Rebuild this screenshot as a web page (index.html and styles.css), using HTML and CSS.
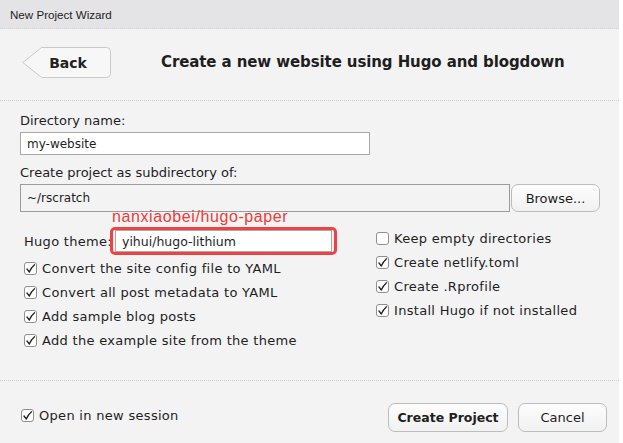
FILE: index.html
```html
<!DOCTYPE html>
<html>
<head>
<meta charset="utf-8">
<link rel="stylesheet" href="styles.css">
</head>
<body>
<div class="window">
  <div class="titlebar">New Project Wizard</div>
  <div class="header">
    <button class="back">
      <svg class="back-shape" width="89" height="31" viewBox="0 0 89 31"><path d="M19.5 0.5 H84.5 Q88.5 0.5 88.5 4.5 V26.5 Q88.5 30.5 84.5 30.5 H19.5 L0.8 15.5 Z" fill="#f7f7f7" stroke="#c9c9c9"/></svg>
      <span class="back-label">Back</span>
    </button>
    <h1 class="title">Create a new website using Hugo and blogdown</h1>
  </div>
  <div class="content">
    <div class="lbl">Directory name:</div>
    <div class="input dir">my-website</div>
    <div class="lbl lbl2">Create project as subdirectory of:</div>
    <div class="path-row">
      <div class="input path">~/rscratch</div>
      <button class="btn browse">Browse...</button>
    </div>
    <div class="note">nanxiaobei/hugo-paper</div>
    <div class="options">
      <div class="col col-left">
        <div class="theme-row">
          <span class="theme-lbl">Hugo theme:</span>
          <div class="highlight"><div class="input theme">yihui/hugo-lithium</div></div>
        </div>
        <div class="check first"><span class="box on"><svg width="11" height="11" viewBox="0 0 11 11"><path d="M2 6 L4.3 9 Q6.3 4.5 9.5 1.8" fill="none" stroke="#222" stroke-width="1.3" stroke-linecap="round" stroke-linejoin="round"/></svg></span>Convert the site config file to YAML</div>
        <div class="check"><span class="box on"><svg width="11" height="11" viewBox="0 0 11 11"><path d="M2 6 L4.3 9 Q6.3 4.5 9.5 1.8" fill="none" stroke="#222" stroke-width="1.3" stroke-linecap="round" stroke-linejoin="round"/></svg></span>Convert all post metadata to YAML</div>
        <div class="check"><span class="box on"><svg width="11" height="11" viewBox="0 0 11 11"><path d="M2 6 L4.3 9 Q6.3 4.5 9.5 1.8" fill="none" stroke="#222" stroke-width="1.3" stroke-linecap="round" stroke-linejoin="round"/></svg></span>Add sample blog posts</div>
        <div class="check"><span class="box on"><svg width="11" height="11" viewBox="0 0 11 11"><path d="M2 6 L4.3 9 Q6.3 4.5 9.5 1.8" fill="none" stroke="#222" stroke-width="1.3" stroke-linecap="round" stroke-linejoin="round"/></svg></span>Add the example site from the theme</div>
      </div>
      <div class="col col-right">
        <div class="check"><span class="box"></span>Keep empty directories</div>
        <div class="check"><span class="box on"><svg width="11" height="11" viewBox="0 0 11 11"><path d="M2 6 L4.3 9 Q6.3 4.5 9.5 1.8" fill="none" stroke="#222" stroke-width="1.3" stroke-linecap="round" stroke-linejoin="round"/></svg></span>Create netlify.toml</div>
        <div class="check"><span class="box on"><svg width="11" height="11" viewBox="0 0 11 11"><path d="M2 6 L4.3 9 Q6.3 4.5 9.5 1.8" fill="none" stroke="#222" stroke-width="1.3" stroke-linecap="round" stroke-linejoin="round"/></svg></span>Create .Rprofile</div>
        <div class="check"><span class="box on"><svg width="11" height="11" viewBox="0 0 11 11"><path d="M2 6 L4.3 9 Q6.3 4.5 9.5 1.8" fill="none" stroke="#222" stroke-width="1.3" stroke-linecap="round" stroke-linejoin="round"/></svg></span>Install Hugo if not installed</div>
      </div>
    </div>
  </div>
  <div class="footer">
    <div class="check session"><span class="box on"><svg width="11" height="11" viewBox="0 0 11 11"><path d="M2 6 L4.3 9 Q6.3 4.5 9.5 1.8" fill="none" stroke="#222" stroke-width="1.3" stroke-linecap="round" stroke-linejoin="round"/></svg></span>Open in new session</div>
    <div class="actions">
      <button class="btn create">Create Project</button>
      <button class="btn cancel">Cancel</button>
    </div>
  </div>
</div>
</body>
</html>
```

FILE: styles.css
```css
* { box-sizing: border-box; }
html, body { margin: 0; padding: 0; background: #ffffff; }
body {
  font-family: "DejaVu Sans", sans-serif;
  font-size: 12px;
  color: #1e1e1e;
}
.window {
  width: 619px;
  height: 443px;
  background: #f3f3f3;
  display: flex;
  flex-direction: column;
}
.titlebar {
  height: 29px;
  background: #e4e4e6;
  border-bottom: 1px dotted #d2d2d4;
  padding: 8px 0 0 10px;
  font-family: "Liberation Sans", Arial, sans-serif;
  font-size: 11.6px;
  color: #222;
}
.header {
  height: 72px;
  display: flex;
  align-items: flex-start;
  padding: 18px 0 0 22px;
  border-bottom: 1px dotted #cfcfcf;
}
.back {
  position: relative;
  width: 89px;
  height: 31px;
  padding: 0;
  border: 0;
  background: transparent;
  font: inherit;
  display: flex;
  align-items: center;
  justify-content: center;
}
.back-shape { position: absolute; left: 0; top: 0; }
.back-label {
  position: relative;
  font-weight: bold;
  font-size: 14px;
  color: #222;
  padding-left: 3px;
}
.title {
  margin: 6px 0 0 50px;
  font-size: 15px;
  letter-spacing: -0.1px;
  font-weight: bold;
  color: #1e1e1e;
}
.content {
  flex: 1;
  padding: 11px 0 0 20px;
  border-bottom: 1px dotted #cfcfcf;
}
.lbl { height: 17px; line-height: 17px; font-size: 13px; }
.lbl2 { margin-top: 9px; }
.input {
  background: #fff;
  border: 1px solid #a9a9a9;
  padding-left: 6px;
  display: flex;
  align-items: center;
  font-size: 12px;
}
.dir { width: 350px; height: 23px; margin-top: 3px; }
.path-row { display: flex; align-items: center; margin-top: 3px; }
.path { width: 490px; height: 28px; background: #f3f3f3; border-color: #9c9c9c; }
.btn {
  font: inherit;
  font-size: 13px;
  color: #1e1e1e;
  border: 1px solid #bcbcbc;
  border-radius: 7px;
  background: linear-gradient(#fdfdfd, #f1f1f1);
  padding: 0;
}
.browse { width: 89px; height: 28px; margin-left: 1px; }
.note {
  font-family: "Liberation Sans", Arial, sans-serif;
  font-size: 16px;
  letter-spacing: 0.6px;
  line-height: 16px;
  height: 16px;
  color: #f03a3a;
  margin: -3px 0 0 92px;
}
.options {
  display: grid;
  grid-template-columns: 352px 1fr;
  margin-top: 2px;
}
.theme-row { display: flex; align-items: center; height: 28px; padding-left: 4px; }
.theme-lbl {
  width: 86px;
  flex: none;
  white-space: nowrap;
  font-size: 13px;
  letter-spacing: 0.3px;
}
.highlight {
  position: relative;
  border: 3px solid #ec4444;
  border-radius: 5px;
  padding: 0 2px;
  height: 28px;
  display: flex;
  align-items: center;
  background: #f3f3f3;
}
.theme { width: 217px; height: 22px; font-size: 12.5px; }
.check {
  display: flex;
  align-items: center;
  height: 24px;
  padding-left: 4px;
  white-space: nowrap;
  font-size: 13px;
  letter-spacing: 0.3px;
}
.check.first { margin-top: 1px; }
.col-right { margin-top: -1px; }
.box {
  width: 13px;
  height: 13px;
  border: 1px solid #8f8f8f;
  border-radius: 3px;
  background: #fff;
  margin-right: 5px;
  display: flex;
  align-items: center;
  justify-content: center;
  flex: none;
}
.box svg { display: block; }
.footer {
  height: 62px;
  display: flex;
  justify-content: space-between;
  padding: 22px 12px 0 17px;
}
.session { height: 24px; margin-top: 0; }
.actions { display: flex; gap: 10px; }
.create { width: 120px; height: 29px; font-weight: bold; font-size: 12.5px; }
.cancel { width: 89px; height: 29px; }
```
